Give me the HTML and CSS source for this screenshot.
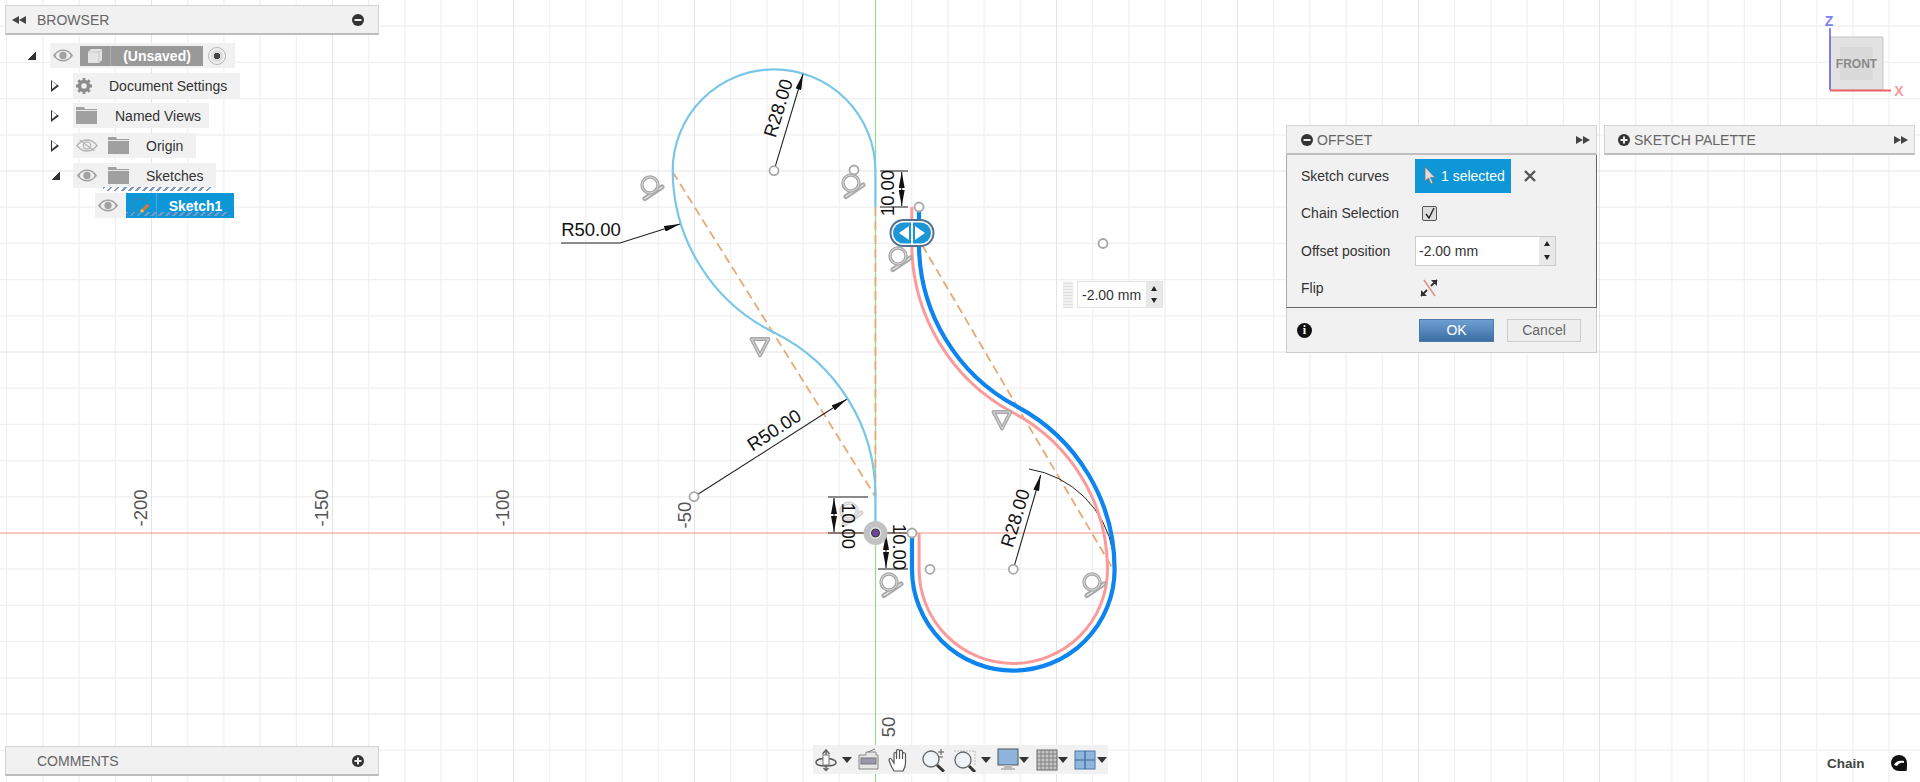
FILE: index.html
```html
<!DOCTYPE html>
<html lang="en">
<head>
<meta charset="utf-8">
<title>Sketch offset</title>
<link rel="stylesheet" href="styles.css">
</head>
<body>
<svg width="0" height="0" class="defs">
  <defs>
    <symbol id="i-eye" viewBox="0 0 24 14"><path d="M1 7C5 1.500 9 .5 12 .5S19 1.500 23 7C19 12.500 15 13.500 12 13.500S5 12.500 1 7Z" fill="#a3a3a3"/><ellipse cx="12" cy="7" rx="8" ry="4.800" fill="#efefef"/><circle cx="12" cy="7" r="4" fill="#a3a3a3"/></symbol>
    <symbol id="i-eye-off" viewBox="0 0 24 14"><path d="M1 7C5 2 9 1 12 1S19 2 23 7C19 12 15 13 12 13S5 12 1 7Z" fill="none" stroke="#b5b5b5" stroke-width="1.500"/><circle cx="12" cy="7" r="4" fill="none" stroke="#b5b5b5" stroke-width="1.500"/><path d="M4 1L20 13" stroke="#b5b5b5" stroke-width="1.500"/></symbol>
    <symbol id="i-folder" viewBox="0 0 21 17"><path d="M0 0H8L9 2H21V17H0Z" fill="#a0a0a0"/><path d="M0 3.500H21" stroke="#e8e8e8"/></symbol>
    <symbol id="i-minus" viewBox="0 0 12 12"><circle cx="6" cy="6" r="6" fill="#333"/><rect x="2.500" y="5" width="7" height="2" fill="#eee"/></symbol>
    <symbol id="i-plus" viewBox="0 0 12 12"><circle cx="6" cy="6" r="6" fill="#333"/><path d="M2.500 6H9.500M6 2.500V9.500" stroke="#eee" stroke-width="2"/></symbol>
    <symbol id="i-rew" viewBox="0 0 14 8"><path d="M0 4L7 0V8ZM7 4L14 0V8Z" fill="#444"/></symbol>
    <symbol id="i-ff" viewBox="0 0 14 8"><path d="M14 4L7 0V8ZM7 4L0 0V8Z" fill="#444"/></symbol>
    <symbol id="i-caret" viewBox="0 0 10 6"><path d="M0 0H10L5 6Z" fill="#333"/></symbol>
    <symbol id="s-tan" viewBox="0 0 30 30" overflow="visible"><path d="M8 25.500L25 14" stroke="#a8a8a8" stroke-width="5" stroke-linecap="round"/><path d="M8 25.500L25 14" stroke="#e4e4e4" stroke-width="1.400" stroke-linecap="round"/><circle cx="13" cy="12" r="8" fill="#fff" fill-opacity=".6" stroke="#a8a8a8" stroke-width="3.400"/><circle cx="13" cy="12" r="8" fill="none" stroke="#e4e4e4" stroke-width=".8"/></symbol>
    <symbol id="s-tri" viewBox="0 0 22 22"><path d="M2.500 3H19.500L11 19.500Z" fill="none" stroke="#a8a8a8" stroke-width="3.800" stroke-linejoin="round"/><path d="M2.500 3H19.500L11 19.500Z" fill="none" stroke="#e4e4e4" stroke-width=".8" stroke-linejoin="round"/></symbol>
    <marker id="arrow" viewBox="0 0 16 6" refX="16" refY="3" markerWidth="16" markerHeight="6" markerUnits="userSpaceOnUse" orient="auto-start-reverse"><path d="M0 0L16 3L0 6Z" fill="#111"/></marker>
  </defs>
</svg>

<main class="app">
  <svg class="canvas" width="1920" height="782" viewBox="0 0 1920 782">
    <path class="grid-minor" d="M6.700 0V782M42.900 0V782M79.100 0V782M115.300 0V782M187.700 0V782M223.900 0V782M260.100 0V782M296.300 0V782M368.700 0V782M404.900 0V782M441.100 0V782M477.300 0V782M549.700 0V782M585.900 0V782M622.100 0V782M658.300 0V782M730.700 0V782M766.900 0V782M803.100 0V782M839.300 0V782M911.700 0V782M947.900 0V782M984.100 0V782M1020.300 0V782M1092.700 0V782M1128.900 0V782M1165.100 0V782M1201.300 0V782M1273.700 0V782M1309.900 0V782M1346.100 0V782M1382.300 0V782M1454.700 0V782M1490.900 0V782M1527.100 0V782M1563.300 0V782M1635.700 0V782M1671.900 0V782M1708.100 0V782M1744.300 0V782M1816.700 0V782M1852.900 0V782M1889.100 0V782M0 26.200H1920M0 62.400H1920M0 98.600H1920M0 134.800H1920M0 207.200H1920M0 243.400H1920M0 279.600H1920M0 315.800H1920M0 388.200H1920M0 424.400H1920M0 460.600H1920M0 496.800H1920M0 569.200H1920M0 605.400H1920M0 641.600H1920M0 677.800H1920M0 750.200H1920"/>
    <path class="grid-major" d="M151.500 0V782M332.500 0V782M513.500 0V782M694.500 0V782M1056.500 0V782M1237.500 0V782M1418.500 0V782M1599.500 0V782M1780.500 0V782M0 171H1920M0 352H1920M0 714H1920"/>
    <path class="axis-y" d="M875.500 0V782"/>
    <path class="axis-x" d="M0 533H1920"/>

    <text class="ruler" transform="translate(140 508) rotate(-90)">-200</text>
    <text class="ruler" transform="translate(321 508) rotate(-90)">-150</text>
    <text class="ruler" transform="translate(502.500 508) rotate(-90)">-100</text>
    <text class="ruler" transform="translate(684 515) rotate(-90)">-50</text>
    <text class="ruler" transform="translate(888 727) rotate(-90)">50</text>

    <path class="construction" d="M672.700 172L875 496M875.400 207V497M922 245L1113 569"/>
    <path class="curve-sketch" d="M875.400 207V170.700A101.300 101.300 0 0 0 672.700 170.700A181 181 0 0 0 775 333A181 181 0 0 1 875.400 496.700V533"/>
    <path class="curve-black" d="M1029 469A101.400 101.400 0 0 1 1113 552"/>
    <path class="curve-pink" d="M911.800 207V243.500A191.200 191.200 0 0 0 1013.200 412.800A177.100 177.100 0 0 1 1107.500 569.300A94.200 94.200 0 0 1 919.100 569.300V533"/>
    <path class="curve-blue" d="M919 207V243.500A184 184 0 0 0 1016.650 406.400A184.300 184.300 0 0 1 1114.600 569.300A101.300 101.300 0 0 1 912 569.300V533"/>

    <use href="#s-tan" x="637" y="173" width="30" height="30"/>
    <use href="#s-tan" x="838" y="171" width="30" height="30"/>
    <use href="#s-tan" x="885" y="244" width="30" height="30"/>
    <use href="#s-tan" x="876" y="570" width="30" height="30"/>
    <use href="#s-tan" x="1079" y="570" width="30" height="30"/>
    <use href="#s-tan" class="faint" x="836" y="499" width="30" height="30"/>
    <use href="#s-tri" x="749" y="336" width="22" height="22"/>
    <use href="#s-tri" x="991" y="409" width="22" height="22"/>

    <path class="leader" d="M774 170.700L803 74" marker-end="url(#arrow)"/>
    <path class="leader" d="M561 243H620L680 224" marker-end="url(#arrow)"/>
    <path class="leader" d="M694 496.700L846.700 399.300" marker-end="url(#arrow)"/>
    <path class="leader" d="M1013.300 569.300L1040.700 475" marker-end="url(#arrow)"/>
    <path class="leader" d="M880 171H908M880 207H908M828 497H868M828 533H870M878 569H908M885 533H912"/>
    <path class="leader" d="M901.700 172V206" marker-start="url(#arrow)" marker-end="url(#arrow)"/>
    <path class="leader" d="M834 498V532" marker-start="url(#arrow)" marker-end="url(#arrow)"/>
    <path class="leader" d="M886 534V568" marker-start="url(#arrow)" marker-end="url(#arrow)"/>

    <text class="dim" transform="translate(778 108) rotate(-73)">R28.00</text>
    <text class="dim" x="591" y="229">R50.00</text>
    <text class="dim" transform="translate(774 430) rotate(-33)">R50.00</text>
    <text class="dim" transform="translate(1015 518) rotate(-73)">R28.00</text>
    <text class="dim" transform="translate(887 193) rotate(-90)">10.00</text>
    <text class="dim" transform="translate(848 526) rotate(90)">10.00</text>
    <text class="dim" transform="translate(899 547) rotate(90)">10.00</text>

    <circle class="point" cx="774" cy="170.700" r="4.500"/>
    <circle class="point" cx="854" cy="170" r="4.500"/>
    <circle class="point" cx="694" cy="496.700" r="4.500"/>
    <circle class="point" cx="919" cy="207" r="4.500"/>
    <circle class="point" cx="912" cy="533" r="4.500"/>
    <circle class="point" cx="930" cy="569.300" r="4.500"/>
    <circle class="point" cx="1013.300" cy="569.300" r="4.500"/>
    <circle class="point" cx="1103" cy="243.500" r="4.500"/>
    <circle class="origin-ring" cx="875.500" cy="533" r="9"/>
    <circle class="origin-dot" cx="875.500" cy="533" r="4"/>

    <rect class="flip-outer" x="890.500" y="220" width="43" height="26" rx="13"/>
    <rect class="flip-inner" x="893" y="222.500" width="38" height="21" rx="10.500"/>
    <path class="flip-gap" d="M912 222V244"/>
    <path class="flip-arrow" d="M909 226V240L899 233ZM915 226V240L925 233Z"/>

    <g class="cube">
      <rect class="cube-face" x="1830" y="37" width="53" height="53" rx="1"/>
      <rect class="cube-inner" x="1840" y="47" width="33" height="33"/>
      <text class="cube-text" x="1856.500" y="68">FRONT</text>
      <path class="axis-z-line" d="M1830 28V90"/>
      <path class="axis-x-line" d="M1830 90.500H1891"/>
      <text class="label-z" x="1829" y="26">Z</text>
      <text class="label-x" x="1899" y="96">X</text>
    </g>
  </svg>

  <section class="browser">
    <header class="panel-head">
      <svg class="ic-rew"><use href="#i-rew"/></svg>
      <span class="panel-title">BROWSER</span>
      <svg class="ic-round push"><use href="#i-minus"/></svg>
    </header>
    <div class="tree">
      <div class="row lvl0">
        <span class="twisty open"></span>
        <div class="item">
          <svg class="ic-eye e-root"><use href="#i-eye"/></svg>
          <div class="doc">
            <span class="doc-ic">
              <svg width="16" height="16" viewBox="0 0 16 16"><path d="M1 4L4 1H15V12L12 15H1Z" fill="#e4e4e4"/><path d="M12 15V4H1M12 4L15 1" fill="none" stroke="#c8c8c8"/></svg>
            </span>
            <span class="doc-name">(Unsaved)</span>
          </div>
          <span class="radio"></span>
        </div>
      </div>
      <div class="row lvl1">
        <span class="twisty"></span>
        <div class="item pad-gear">
          <svg width="16" height="16" viewBox="0 0 16 16"><circle cx="8" cy="8" r="4.500" fill="none" stroke="#8c8c8c" stroke-width="3.500"/><path d="M8 0V3M8 13V16M0 8H3M13 8H16M2.300 2.300L4.500 4.500M11.500 11.500L13.700 13.700M13.700 2.300L11.500 4.500M4.500 11.500L2.300 13.700" stroke="#8c8c8c" stroke-width="2.800"/></svg>
          <span class="label l-doc">Document Settings</span>
        </div>
      </div>
      <div class="row lvl1">
        <span class="twisty"></span>
        <div class="item pad-views">
          <svg class="ic-folder"><use href="#i-folder"/></svg>
          <span class="label l-views">Named Views</span>
        </div>
      </div>
      <div class="row lvl1">
        <span class="twisty"></span>
        <div class="item pad-origin">
          <svg class="ic-eye"><use href="#i-eye-off"/></svg>
          <svg class="ic-folder f-gap"><use href="#i-folder"/></svg>
          <span class="label l-origin">Origin</span>
        </div>
      </div>
      <div class="row lvl1">
        <span class="twisty open"></span>
        <div class="item pad-origin pad-sketches">
          <svg class="ic-eye"><use href="#i-eye"/></svg>
          <svg class="ic-folder f-gap"><use href="#i-folder"/></svg>
          <span class="label l-origin">Sketches</span>
          <span class="wavy"></span>
        </div>
      </div>
      <div class="row lvl2">
        <div class="item pad-sketch">
          <svg class="ic-eye"><use href="#i-eye"/></svg>
          <div class="sketch">
            <span class="sketch-ic">
              <svg width="22" height="16" viewBox="0 0 22 16"><path d="M3 1H15V13H3Z" fill="none" stroke="#3a86b8"/><path d="M12 13L18 7" stroke="#e8742a" stroke-width="3"/><path d="M11 14L13 12" stroke="#f5c33b" stroke-width="3"/></svg>
            </span>
            <span class="sketch-name">Sketch1</span>
            <span class="wavy w-sketch"></span>
          </div>
        </div>
      </div>
    </div>
  </section>

  <section class="comments">
    <header class="panel-head">
      <span class="panel-title title-c">COMMENTS</span>
      <svg class="ic-round push"><use href="#i-plus"/></svg>
    </header>
  </section>

  <section class="offset">
    <header class="panel-head head-offset">
      <svg class="ic-round"><use href="#i-minus"/></svg>
      <span class="panel-title title-o">OFFSET</span>
      <svg class="ic-rew push"><use href="#i-ff"/></svg>
    </header>
    <div class="form">
      <div class="form-row">
        <span class="form-label">Sketch curves</span>
        <div class="selected">
          <svg width="12" height="19" viewBox="0 0 12 19"><path d="M1 1V15L4.500 12L7 18L9 17L6.500 11.500H11Z" fill="#ddd" stroke="#777" stroke-width=".8"/></svg>
          <span>1 selected</span>
        </div>
        <svg class="clear" width="12" height="12" viewBox="0 0 12 12"><path d="M1 1L11 11M11 1L1 11" stroke="#555" stroke-width="2.400"/></svg>
      </div>
      <div class="form-row">
        <span class="form-label">Chain Selection</span>
        <span class="check"><svg width="12" height="13" viewBox="0 0 12 13"><path d="M2 7L5 11L10 1" fill="none" stroke="#222" stroke-width="1.400"/></svg></span>
      </div>
      <div class="form-row">
        <span class="form-label">Offset position</span>
        <div class="spin">
          <span class="spin-value">-2.00 mm</span>
          <span class="spin-btns"><i class="up"></i><i class="down"></i></span>
        </div>
      </div>
      <div class="form-row">
        <span class="form-label">Flip</span>
        <svg class="flip" width="18" height="18" viewBox="0 0 18 18"><path d="M4 1L15 17" stroke="#e68a80" stroke-width="1.500"/><path d="M1 17L7 11M17 1L11 7" stroke="#333" stroke-width="1.800"/><path d="M1 11V17H7ZM17 7V1H11Z" fill="#333"/></svg>
      </div>
    </div>
    <footer class="actions">
      <span class="info">i</span>
      <button class="btn ok">OK</button>
      <button class="btn cancel">Cancel</button>
    </footer>
  </section>

  <section class="palette">
    <header class="panel-head head-offset">
      <svg class="ic-round pal-ic"><use href="#i-plus"/></svg>
      <span class="panel-title title-o">SKETCH PALETTE</span>
      <svg class="ic-rew push"><use href="#i-ff"/></svg>
    </header>
  </section>

  <div class="float-input">
    <span class="grip"></span>
    <div class="spin spin-float">
      <span class="spin-value">-2.00 mm</span>
      <span class="spin-btns"><i class="up"></i><i class="down"></i></span>
    </div>
  </div>

  <nav class="toolbar">
    <svg class="tool" viewBox="0 0 24 24"><path d="M12 2V22M8.500 6L12 2L15.500 6M9.500 20L12 22.500L14.500 20" fill="none" stroke="#666" stroke-width="1.500"/><path d="M9 10.500C4 11 2 13 2 14.500C2 16.500 6 18 12 18S22 16.500 22 14.500C22 13 20 11.500 15 10.500" fill="none" stroke="#555" stroke-width="1.500"/><rect x="9" y="7" width="6" height="10" fill="#fff" stroke="#777"/></svg>
    <svg class="caret"><use href="#i-caret"/></svg>
    <svg class="tool g2" viewBox="0 0 24 24"><path d="M4 7H10V4H20V7H22V21H3V7Z" fill="#e6e6e6" stroke="#888"/><rect x="5" y="10" width="15" height="6" fill="#99a" stroke="#777"/><path d="M12 4L19 1" stroke="#777"/></svg>
    <svg class="tool g8" viewBox="0 0 24 24"><path d="M6 23C3 19 2 15 1 12C1 10 3 10 4 12L6 15V6C6 4 8 4 8.500 6V11V3C8.500 1 11 1 11.500 3V11V3C12 1.500 14.500 2 14.500 4V11V6C15 4 17.500 4.500 17.500 6.500V15C17.500 19 16 21 15 23Z" fill="#fff" stroke="#555" stroke-width="1.200"/></svg>
    <svg class="tool g9" viewBox="0 0 24 24"><circle cx="10" cy="11" r="8" fill="#eef4f8" stroke="#666" stroke-width="1.300"/><path d="M16 17L23 23.500" stroke="#333" stroke-width="3"/><path d="M20 1V7M17 4H23M18 9H22" stroke="#555"/></svg>
    <svg class="tool g8" viewBox="0 0 24 24"><path d="M1 3H22V17" fill="none" stroke="#bbb" stroke-dasharray="2 1"/><circle cx="10" cy="12" r="8" fill="#eef4f8" stroke="#666" stroke-width="1.300"/><path d="M16 18L22 24" stroke="#333" stroke-width="3"/></svg>
    <svg class="caret"><use href="#i-caret"/></svg>
    <svg class="tool g3" viewBox="0 0 24 24"><rect x="2" y="1" width="20" height="16" fill="#8fb5dd" stroke="#555"/><path d="M8 17H16V20H19V22H5V20H8Z" fill="#bbb"/></svg>
    <svg class="caret pull3"><use href="#i-caret"/></svg>
    <svg class="tool g4" viewBox="0 0 24 24"><rect x="2" y="2" width="20" height="20" fill="#c4c4c4" stroke="#666"/><path d="M6 2V22M10 2V22M14 2V22M18 2V22M2 6H22M2 10H22M2 14H22M2 18H22" stroke="#777" stroke-width=".8"/></svg>
    <svg class="caret pull3"><use href="#i-caret"/></svg>
    <svg class="tool g3" viewBox="0 0 24 24"><rect x="2" y="3" width="20" height="18" fill="#8fb5dd" stroke="#4d78a8"/><path d="M12 3V21M2 12H22" stroke="#3b6798" stroke-width="1.200"/></svg>
    <svg class="caret pull2"><use href="#i-caret"/></svg>
  </nav>

  <div class="status">
    <span class="status-text">Chain</span>
    <svg width="18" height="18" viewBox="0 0 18 18"><path d="M9 1A8 8 0 0 1 17 9C17 12 17 15 16.500 17C14 17 12 17 9 17A8 8 0 0 1 9 1Z" fill="#111"/><path d="M4 11C6 7 9 6 14 7L14 9C11 8.500 9 9 7 12Z" fill="#fff"/></svg>
  </div>
</main>
</body>
</html>
```

FILE: styles.css
```css
* { box-sizing: border-box; }
html, body { margin: 0; padding: 0; height: 100%; background: #fff; overflow: hidden; }
body { font-family: "Liberation Sans", Arial, sans-serif; font-size: 14px; color: #333; }

.defs { position: absolute; }
.app { position: relative; width: 1920px; height: 782px; overflow: hidden; background: #fff; }
.canvas { position: absolute; left: 0; top: 0; }

/* canvas */
.grid-minor { stroke: #f0f0f0; stroke-width: 1.2; fill: none; }
.grid-major { stroke: #e4e4e4; stroke-width: 1; fill: none; }
.axis-y { stroke: #92dc92; stroke-width: 1.2; fill: none; }
.axis-x { stroke: #f2917f; stroke-width: 1.2; fill: none; }
.ruler { font-size: 18.5px; fill: #555; text-anchor: middle; dominant-baseline: central; }
.dim { font-size: 18.500px; fill: #111; text-anchor: middle; dominant-baseline: central; }
.construction { stroke: #e8a872; stroke-width: 1.800; stroke-dasharray: 9 5; fill: none; }
.curve-sketch { stroke: #79c6e8; stroke-width: 2.200; fill: none; }
.curve-black { stroke: #222; stroke-width: 1; fill: none; }
.curve-pink { stroke: #fb9a9a; stroke-width: 3; fill: none; }
.curve-blue { stroke: #0d84ee; stroke-width: 4.200; fill: none; }
.leader { stroke: #222; stroke-width: 1.100; fill: none; }
.faint { opacity: .5; }
.point { fill: #fff; stroke: #a8a8a8; stroke-width: 1.800; }
.origin-ring { fill: #e0e0e0; stroke: #c2c2c2; stroke-width: 6; }
.origin-dot { fill: #6a479c; stroke: #333; stroke-width: 1; }
.flip-outer { fill: #fff; stroke: #55708c; stroke-width: 2; }
.flip-inner { fill: #1b97d8; }
.flip-gap { stroke: #fff; stroke-width: 2; }
.flip-arrow { fill: #fff; }
.cube-face { fill: #e2e2e2; stroke: #c4c4c4; }
.cube-inner { fill: #dadada; }
.cube-text { font-size: 12px; font-weight: bold; fill: #8a8a8a; text-anchor: middle; }
.axis-z-line { stroke: #5c5cf0; stroke-width: 1.500; }
.axis-x-line { stroke: #ee6363; stroke-width: 1.800; }
.label-z { font-size: 14px; font-weight: bold; fill: #8080f0; text-anchor: middle; }
.label-x { font-size: 14px; font-weight: bold; fill: #f29a9a; text-anchor: middle; }

/* panels */
.panel-head { display: flex; align-items: center; height: 30px; background: #f1f1f1; border: 1px solid #d4d4d4; border-bottom: 2px solid #bdbdbd; color: #666; }
.panel-title { font-size: 14px; }
.push { margin-left: auto; }
.ic-rew { width: 14px; height: 8px; flex: none; }
.ic-round { width: 12px; height: 12px; flex: none; }

.browser { position: absolute; left: 5px; top: 5px; width: 374px; }
.browser .panel-head { padding: 0 14px 0 6px; }
.browser .panel-title { margin-left: 11px; }
.comments { position: absolute; left: 5px; top: 746px; width: 374px; }
.comments .panel-head { padding: 0 14px 0 30px; }
.title-c { margin-left: 1px; }

/* tree */
.tree { display: flex; flex-direction: column; gap: 5px; padding-top: 8px; }
.row { display: flex; align-items: center; height: 25px; }
.lvl0 { padding-left: 22px; }
.lvl1 { padding-left: 46px; }
.lvl2 { padding-left: 90px; }
.twisty { position: relative; flex: none; width: 0; height: 0; margin-right: 14px; border-style: solid; border-width: 6.500px 0 6.500px 8px; border-color: transparent transparent transparent #333; }
.twisty::after { content: ""; position: absolute; left: -6.800px; top: -4.300px; border-style: solid; border-width: 4.300px 0 4.300px 5.200px; border-color: transparent transparent transparent #fff; }
.twisty.open { width: 9px; height: 9px; border: 0; margin-right: 13px; background: linear-gradient(135deg, transparent 50%, #333 50%); }
.twisty.open::after { display: none; }
.lvl0 .twisty.open { margin-right: 14px; }
.item { position: relative; display: flex; align-items: center; height: 25px; background: #f1f1f1; }
.ic-eye { width: 22px; height: 13px; flex: none; }
.ic-folder { width: 21px; height: 17px; flex: none; }
.f-gap { margin-left: 10px; }
.label { color: #333; font-size: 14px; white-space: nowrap; }

.lvl0 .item { width: 185px; padding-left: 2px; }
.e-root { margin-right: 6px; }
.doc { display: flex; align-items: center; height: 20px; width: 123px; background: #999; }
.doc-ic { display: flex; align-items: center; justify-content: center; width: 31px; height: 20px; border-right: 1px solid #adadad; }
.doc-name { flex: 1; text-align: center; color: #fff; font-weight: bold; }
.radio { width: 18px; height: 18px; margin-left: 5px; border-radius: 50%; border: 1px solid #b5b5b5; background: radial-gradient(circle, #444 0 3px, #ddd 3.500px 6px, #f2f2f2 6.500px); }

.pad-gear { width: 167px; padding-left: 3px; }
.l-doc { margin-left: 17px; }
.pad-views { width: 136px; padding-left: 3px; }
.l-views { margin-left: 18px; }
.pad-origin { width: 123px; padding-left: 3px; }
.pad-sketches { width: 143px; }
.l-origin { margin-left: 17px; }
.wavy { position: absolute; left: 30px; right: 3px; bottom: -3px; height: 4px; background: repeating-linear-gradient(135deg, #7d98c4 0 2px, transparent 2px 5px); }

.pad-sketch { width: 139px; padding-left: 2px; }
.sketch { position: relative; display: flex; align-items: center; height: 25px; width: 108px; margin-left: 7px; background: #0f96d6; }
.sketch-ic { display: flex; align-items: center; justify-content: center; width: 31px; height: 25px; border-right: 1px solid #4aa9da; }
.sketch-name { flex: 1; text-align: center; color: #fff; font-weight: bold; }
.w-sketch { left: 0; right: 4px; bottom: 2px; }

/* offset */
.offset { position: absolute; left: 1286px; top: 125px; width: 311px; }
.palette { position: absolute; left: 1604px; top: 125px; width: 311px; }
.head-offset { padding: 0 6px 0 14px; }
.title-o { margin-left: 4px; }
.pal-ic { margin-left: -1px; }
.form { height: 153px; padding-top: 2px; background: #f1f1f1; border-left: 1px solid #aaa; border-right: 1px solid #666; border-bottom: 1px solid #666; }
.form-row { display: flex; align-items: center; height: 37.500px; }
.form-label { flex: none; width: 128px; padding-left: 14px; color: #333; }
.selected { display: flex; align-items: center; gap: 5px; width: 96px; height: 34px; padding-left: 9px; background: #0f96d6; color: #fff; }
.clear { margin-left: 13px; }
.check { display: flex; align-items: center; justify-content: center; width: 15px; height: 15px; margin-left: 7px; background: #ddd; border: 1px solid #555; border-radius: 2px; }
.flip { margin-left: 5px; }
.spin { display: flex; width: 141px; height: 30px; background: #fff; border: 1px solid #ccc; }
.spin-value { flex: 1; display: flex; align-items: center; padding-left: 3px; color: #333; }
.spin-btns { display: flex; flex-direction: column; width: 16px; background: #e8e8e8; }
.spin-btns i { flex: 1; display: flex; align-items: center; justify-content: center; }
.spin-btns i::before { content: ""; border-style: solid; border-width: 0 3.500px 5px; border-color: transparent transparent #222; }
.spin-btns .down::before { border-width: 5px 3.500px 0; border-color: #222 transparent transparent; }
.actions { display: flex; align-items: center; height: 45px; padding: 0 15px 0 10px; background: #f1f1f1; border: 1px solid #ccc; border-top: 0; }
.info { display: flex; align-items: center; justify-content: center; width: 15px; height: 15px; border-radius: 50%; background: #111; color: #fff; font: bold 12px "Liberation Serif", serif; }
.btn { height: 23px; font: 14px "Liberation Sans", Arial, sans-serif; padding: 0; }
.ok { width: 75px; margin-left: auto; color: #fff; background: linear-gradient(#6fa0d2, #3a6da4); border: 1px solid #4f79a7; }
.cancel { width: 74px; margin-left: 13px; color: #666; background: #eee; border: 1px solid #ccc; }

/* floating input */
.float-input { position: absolute; left: 1063px; top: 281px; display: flex; width: 100px; height: 27px; }
.grip { width: 10px; margin-right: 4px; background: repeating-linear-gradient(0deg, #ddd 0 1px, #f2f2f2 1px 3px); }
.spin-float { width: 86px; height: 27px; border: 1px solid #e4e4e4; }
.spin-float .spin-value { padding-left: 4px; }

/* toolbar */
.toolbar { position: absolute; left: 813px; top: 745px; display: flex; align-items: center; width: 295px; height: 29px; padding-left: 1px; background: #f1f1f1; }
.tool { width: 24px; height: 24px; flex: none; }
.caret { width: 14px; height: 6px; flex: none; margin-left: 2px; }
.g2 { margin-left: 2px; }
.g3 { margin-left: 3px; }
.g4 { margin-left: 4px; }
.g8 { margin-left: 8px; }
.g9 { margin-left: 9px; }
.pull3 { margin-left: -3px; }
.pull2 { margin-left: -2px; }

/* status */
.status { position: absolute; left: 1827px; top: 754px; display: flex; align-items: center; gap: 25px; height: 18px; }
.status-text { font-size: 13.500px; font-weight: bold; color: #444; }
```
